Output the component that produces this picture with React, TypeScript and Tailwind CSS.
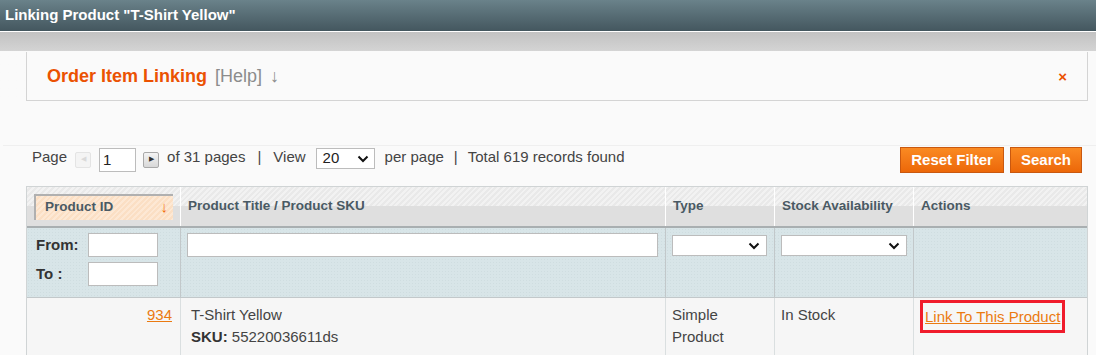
import { useState } from 'react';

/* ------------------------------------------------------------------ */
/*  Styles                                                             */
/* ------------------------------------------------------------------ */

const font = "font-['Liberation_Sans',Arial,sans-serif]";

const stripes =
  'bg-[repeating-linear-gradient(135deg,#f2f2f2_0px,#f2f2f2_2px,#e9e9e9_2px,#e9e9e9_4px)]';

const orangeStripes =
  'bg-[repeating-linear-gradient(135deg,#fde8d4_0px,#fde8d4_2px,#fbdfc4_2px,#fbdfc4_4px)]';

const columns = [
  { key: 'id', label: 'Product ID', width: 'w-[154px]' },
  { key: 'title', label: 'Product Title / Product SKU', width: 'w-[485px]' },
  { key: 'type', label: 'Type', width: 'w-[109px]' },
  { key: 'stock', label: 'Stock Availability', width: 'w-[139px]' },
  { key: 'actions', label: 'Actions', width: 'flex-1' },
];

/* ------------------------------------------------------------------ */
/*  Component                                                          */
/* ------------------------------------------------------------------ */

export default function App() {
  const [page, setPage] = useState('1');

  return (
    <div className={`${font} h-[355px] w-[1096px] overflow-hidden bg-[#fafafa] text-[15px] text-[#2f2f2f]`}>
      {/* Window title */}
      <div className="flex h-[31px] items-center bg-gradient-to-b from-[#6a828a] to-[#44575f] px-[5px] text-[15px] font-bold text-white">
        Linking Product "T-Shirt Yellow"
      </div>
      <div className="h-px bg-white" />

      {/* Page header */}
      <div className="bg-gradient-to-b from-[#c2c2c2] from-0% via-[#d4d4d4] via-[28%] to-[#fafafa] to-[28%] pt-[20px] pr-[8px] pl-[26px]">
        <div className="flex h-[49px] items-center border-r border-b border-l border-[#d4d4d4] bg-[#fafafa] pr-[20px] pl-[20px]">
          <h3 className="text-[18px] font-bold text-[#eb5202]">Order Item Linking</h3>
          <span className="ml-[8px] text-[18px] text-[#8c8c8c]">[Help]</span>
          <span className="ml-[8px] text-[18px] text-[#8c8c8c]">↓</span>
          <button className="ml-auto text-[15px] font-bold leading-none text-[#eb5202]">×</button>
        </div>
      </div>

      <div className="mt-[44px] ml-[3px] h-px bg-[#efefef]" />

      {/* Pager + actions */}
      <div className="flex h-[27px] items-center pr-[14px] pl-[32px] text-[#444]">
        <span className="-mt-[4px]">Page</span>
        <span className="ml-[8px] flex h-[16px] w-[16px] items-center justify-center rounded-[2px] border border-[#e4e4e4] bg-[#f4f4f4] text-[7px] text-[#dadada]">
          ◀
        </span>
        <input
          value={page}
          onChange={(e) => setPage(e.target.value)}
          className="ml-[8px] h-[24px] w-[37px] border border-[#bcbcbc] bg-white px-[3px] text-[15px] text-[#222] outline-none"
        />
        <span className="ml-[7px] flex h-[16px] w-[16px] items-center justify-center rounded-[2px] border border-[#a9a9a9] bg-gradient-to-b from-[#f4f4f4] to-[#d8d8d8] text-[7px] text-[#333]">
          ▶
        </span>
        <span className="-mt-[4px] ml-[8px]">of 31 pages</span>
        <span className="-mt-[4px] mx-[12px]">|</span>
        <span className="-mt-[4px]">View</span>
        <div className="-mt-[2px] ml-[10px] flex h-[21px] w-[59px] items-center justify-between border border-[#bcbcbc] bg-white pr-[5px] pl-[6px] text-[15px] text-[#222]">
          20
          <svg width="12" height="8" viewBox="0 0 12 8">
            <path d="M1.5 1.5 L6 6 L10.5 1.5" fill="none" stroke="#111" strokeWidth="2" />
          </svg>
        </div>
        <span className="-mt-[4px] ml-[10px]">per page</span>
        <span className="-mt-[4px] mx-[10px]">|</span>
        <span className="-mt-[4px]">Total 619 records found</span>

        <div className="ml-auto flex gap-[6px] pt-[1px]">
          <button className="h-[26px] border border-[#c9580f] bg-gradient-to-b from-[#fa8a22] to-[#ec6707] px-[10px] text-[15px] font-bold text-white">
            Reset Filter
          </button>
          <button className="h-[26px] border border-[#c9580f] bg-gradient-to-b from-[#fa8a22] to-[#ec6707] px-[10px] text-[15px] font-bold text-white">
            Search
          </button>
        </div>
      </div>

      {/* Grid */}
      <div className="mx-[26px] mt-[13px] w-[1062px] border-x border-t border-[#d0d4d5]">
        {/* Headings */}
        <div className="flex h-[41px] border-b-[2px] border-[#a9afb1]">
          {columns.map((col) => (
            <div
              key={col.key}
              className={`${col.width} relative flex items-center border-r border-white px-[7px] text-[13.5px] font-bold text-[#4a5a64] last:border-r-0`}
            >
              <div className={`absolute inset-x-0 top-0 h-[21px] ${stripes}`} />
              <div className="absolute inset-x-0 bottom-0 h-[20px] bg-[#dfdfdf]" />
              {col.key === 'id' ? (
                <div
                  className={`relative flex h-[26px] w-full items-center justify-between border-t-2 border-l-2 border-[#b0b0b0] border-r-white border-b-white ${orangeStripes} pr-[5px] pl-[9px]`}
                >
                  {col.label}
                  <span className="text-[15px] font-normal text-[#f36d0a]">↓</span>
                </div>
              ) : (
                <span className="relative">{col.label}</span>
              )}
            </div>
          ))}
        </div>

        {/* Filters */}
        <div className="flex h-[70px] border-b border-[#c2c8ca] bg-[#d8e5e8] bg-[radial-gradient(#cfdde0_1px,transparent_1px)] bg-[length:3px_3px]">
          <div className="flex w-[154px] flex-col gap-[5px] border-r border-[#c2c8ca] pt-[5px] pl-[9px] font-bold text-[#333]">
            <div className="flex items-center">
              <span className="w-[52px]">From:</span>
              <input className="h-[24px] w-[70px] border border-[#bcbcbc] bg-white outline-none" />
            </div>
            <div className="flex items-center">
              <span className="w-[52px]">To :</span>
              <input className="h-[24px] w-[70px] border border-[#bcbcbc] bg-white outline-none" />
            </div>
          </div>
          <div className="w-[485px] border-r border-[#c2c8ca] pt-[5px] pl-[6px]">
            <input className="h-[24px] w-[471px] border border-[#bcbcbc] bg-white outline-none" />
          </div>
          <div className="w-[109px] border-r border-[#c2c8ca] pt-[7px] pl-[6px]">
            <FilterSelect width="w-[95px]" />
          </div>
          <div className="w-[139px] border-r border-[#c2c8ca] pt-[7px] pl-[6px]">
            <FilterSelect width="w-[126px]" />
          </div>
          <div className="flex-1" />
        </div>

        {/* Row */}
        <div className="flex h-[60px] bg-[#f6f6f6] leading-[22px] text-[#444]">
          <div className="flex w-[154px] justify-end border-r border-[#dadfe0] pt-[6px] pr-[8px]">
            <a href="#" className="text-[#eb7a11] underline">
              934
            </a>
          </div>
          <div className="w-[485px] border-r border-[#dadfe0] pt-[6px] pl-[10px] text-[#444]">
            <div>T-Shirt Yellow</div>
            <div>
              <b className="text-[#333]">SKU:</b> 55220036611ds
            </div>
          </div>
          <div className="w-[109px] border-r border-[#dadfe0] pt-[6px] pl-[6px]">
            Simple
            <br />
            Product
          </div>
          <div className="w-[139px] border-r border-[#dadfe0] pt-[6px] pl-[6px]">In Stock</div>
          <div className="flex-1 pt-[2px] pl-[6px]">
            <a
              href="#"
              className="inline-block border-[3px] border-[#f01c2c] px-[2px] leading-[27px] text-[#eb7a11] underline"
            >
              Link To This Product
            </a>
          </div>
        </div>
      </div>
    </div>
  );
}

/* ------------------------------------------------------------------ */
/*  Filter Select                                                      */
/* ------------------------------------------------------------------ */

function FilterSelect({ width }: { width: string }) {
  return (
    <div className={`${width} flex h-[21px] items-center justify-end border border-[#bcbcbc] bg-white pr-[6px]`}>
      <svg width="12" height="8" viewBox="0 0 12 8">
        <path d="M1.5 1.5 L6 6 L10.5 1.5" fill="none" stroke="#111" strokeWidth="2" />
      </svg>
    </div>
  );
}
